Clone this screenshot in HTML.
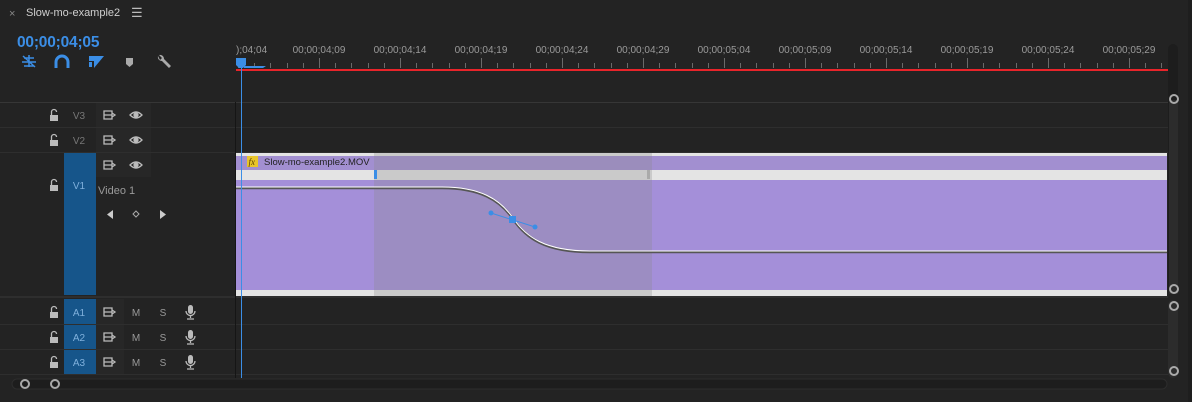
<!DOCTYPE html>
<html><head><meta charset="utf-8"><style>
body{margin:0;width:1192px;height:402px;background:#232323;overflow:hidden;font-family:"Liberation Sans",sans-serif;position:relative}
.a{position:absolute}
.t{color:#9a9a9a;font-size:10px}
</style></head><body>
<div class="a t" style="left:9px;top:8px;font-size:11px;color:#888">×</div>
<div class="a" style="left:26px;top:7px;font-size:11px;color:#cfcfcf">Slow-mo-example2</div>
<div class="a" style="left:131px;top:5px;font-size:13px;color:#bbb">☰</div>
<div class="a" style="left:17px;top:34px;font-size:15.5px;font-weight:bold;color:#3b8ee6;letter-spacing:-0.2px">00;00;04;05</div>
<svg class="a" style="left:0;top:0" width="1192" height="402">
<g fill="#3b8ee6" stroke="#3b8ee6">
<path d="M22 62h14M24 58h10M29 55v12M24 66h10M23 56l12 11" stroke-width="1.5" fill="none"/>
<path d="M56 68v-6a6 6 0 0 1 12 0v6" stroke-width="3" fill="none"/>
<path d="M89 56h5v5h-5zM89 62h3v5h-3z" stroke="none"/><path d="M94 56l10 0-10 12z" stroke="none"/>
</g>
<path d="M126 58h7v6l-3.5 3-3.5-3z" fill="#aaa"/>
<path d="M158 56a4 4 0 0 0 4 5l7 7 2-2-7-7a4 4 0 0 0-5-4l3 3-2 2z" fill="#aaa"/>
<g id="ticks" stroke="#6a6a6a" stroke-width="1"></g>
<g id="labs" fill="#9a9a9a" font-size="10" font-family="Liberation Sans" text-anchor="middle"></g>
<rect x="236" y="69" width="932" height="2" fill="#e8242a"/>
<g fill="#2e2e2e">
<rect x="0" y="102" width="1168" height="1" fill="#363636"/>
<rect x="0" y="127" width="1168" height="1"/>
<rect x="0" y="152" width="1168" height="1"/>
<rect x="0" y="296" width="1168" height="2"/>
<rect x="0" y="324" width="1168" height="1"/>
<rect x="0" y="349" width="1168" height="1"/>
<rect x="0" y="374" width="1168" height="1"/>
<rect x="235" y="102" width="1" height="276" fill="#151515"/>
</g>
<rect x="96" y="103" width="55" height="24" fill="#272727"/>
<rect x="96" y="128" width="55" height="24" fill="#272727"/>
<rect x="96" y="153" width="55" height="24" fill="#272727"/>
<rect x="96" y="299" width="28" height="25" fill="#272727"/>
<rect x="96" y="325" width="28" height="24" fill="#272727"/>
<rect x="96" y="350" width="28" height="24" fill="#272727"/>
<rect x="64" y="153" width="32" height="142" fill="#16558a"/>
<rect x="64" y="299" width="32" height="25" fill="#16558a"/>
<rect x="64" y="325" width="32" height="24" fill="#16558a"/>
<rect x="64" y="350" width="32" height="24" fill="#16558a"/>
<g fill="#9a9a9a" font-size="10" font-family="Liberation Sans" text-anchor="middle">
<text x="79" y="119" fill="#777">V3</text><text x="79" y="144" fill="#777">V2</text>
<text x="79" y="189" fill="#7fb0dc">V1</text>
<text x="79" y="316" fill="#7fb0dc">A1</text><text x="79" y="341" fill="#7fb0dc">A2</text><text x="79" y="366" fill="#7fb0dc">A3</text>
<text x="136" y="316">M</text><text x="136" y="341">M</text><text x="136" y="366">M</text>
<text x="163" y="316">S</text><text x="163" y="341">S</text><text x="163" y="366">S</text>
</g>
<text x="98" y="194" fill="#9a9a9a" font-size="11" font-family="Liberation Sans">Video 1</text>
<g id="icons" fill="none" stroke="#bbb" stroke-width="1.3"></g>
<path d="M113 210v9l-6-4.5z" fill="#ccc"/><path d="M160 210v9l6-4.5z" fill="#ccc"/>
<path d="M136 211l3 3-3 3-3-3z" fill="none" stroke="#aaa"/>
<rect x="236" y="153" width="931" height="143" fill="#e4e4e4"/>
<rect x="236" y="156" width="931" height="14" fill="#a28fd0"/>
<rect x="236" y="180" width="931" height="110" fill="#a48fd9"/>
<rect x="374" y="153" width="278" height="143" fill="#8a8a8a" opacity="0.28"/>
<rect x="247" y="156" width="11" height="11" fill="#e8c52a"/>
<text x="248.5" y="165" font-size="9" font-style="italic" fill="#5a3e00" font-family="Liberation Serif">fx</text>
<text x="264" y="165" font-size="9.5" fill="#222" font-family="Liberation Sans">Slow-mo-example2.MOV</text>
<rect x="374" y="170" width="3" height="9" fill="#3b8ee6"/>
<rect x="647" y="170" width="3" height="9" fill="#aaa"/>
<path d="M236 188H442C480 188 500 200 513 219C526 238 545 252 590 252H1167" stroke="#555" stroke-width="2.5" fill="none"/>
<path d="M236 187H442C480 187 500 199 513 218C526 237 545 251 590 251H1167" stroke="#fff" stroke-width="1" fill="none"/>
<path d="M491 213L535 227" stroke="#3b8ee6" stroke-width="1"/>
<circle cx="491" cy="213" r="2.5" fill="#3b8ee6"/><circle cx="535" cy="227" r="2.5" fill="#3b8ee6"/>
<rect x="509" y="216" width="7" height="7" fill="#3b8ee6"/>
<rect x="241" y="60" width="1" height="318" fill="#3b8ee6"/>
<path d="M236 58h10v7l-3 3h-4l-3-3z" fill="#3b8ee6"/>
<path d="M244 66h22l-3 2h-19z" fill="#3b8ee6"/>
<rect x="1168" y="44" width="10" height="250" rx="5" fill="#1d1d1d"/>
<rect x="1169" y="100" width="9" height="194" fill="#2c2c2c"/>
<rect x="1168" y="300" width="10" height="78" rx="5" fill="#2c2c2c"/>
<rect x="12" y="379" width="1155" height="10" rx="5" fill="#1d1d1d" stroke="#2d2d2d"/>
<g fill="none" stroke="#aaa" stroke-width="2">
<circle cx="1174" cy="99" r="4"/><circle cx="1174" cy="289" r="4"/><circle cx="1174" cy="306" r="4"/><circle cx="1174" cy="371" r="4"/>
<circle cx="25" cy="384" r="4"/><circle cx="55" cy="384" r="4"/>
</g>
<rect x="1188" y="0" width="4" height="402" fill="#1e1e1e"/>
</svg>
<script>
var ns="http://www.w3.org/2000/svg",tk=document.getElementById('ticks'),lb=document.getElementById('labs'),ic=document.getElementById('icons');
var labs=["00;00;04;04","00;00;04;09","00;00;04;14","00;00;04;19","00;00;04;24","00;00;04;29","00;00;05;04","00;00;05;09","00;00;05;14","00;00;05;19","00;00;05;24","00;00;05;29"];
for(var i=0;i<80;i++){var x=238+i*16.2;if(x>1166)break;var l=document.createElementNS(ns,'line');l.setAttribute('x1',Math.round(x)+.5);l.setAttribute('x2',Math.round(x)+.5);l.setAttribute('y1',i%5?63:58);l.setAttribute('y2',68);tk.appendChild(l);}
for(var j=1;j<12;j++){var t=document.createElementNS(ns,'text');var x=238+j*81;t.setAttribute('x',x);t.setAttribute('y',53);t.textContent=labs[j];lb.appendChild(t);}
var t0=document.createElementNS(ns,'text');t0.setAttribute('x',236);t0.setAttribute('y',53);t0.setAttribute('text-anchor','start');t0.textContent=");04;04";lb.appendChild(t0);
function lock(y){return '<rect x="50" y="'+(y-1)+'" width="8" height="6" fill="#bbb" stroke="none"/><path d="M51.5 '+(y-1)+'v-3a2.5 2.5 0 0 1 5 0" />';}
function sync(y){return '<path d="M104 '+(y-4)+'h8v8h-8zM104 '+y+'h8M112 '+(y-2)+'l3 2-3 2"/>';}
function eye(y){return '<path d="M130 '+y+'q6-6 12 0q-6 6-12 0z"/><circle cx="136" cy="'+y+'" r="2" fill="#bbb"/>';}
function mic(y){return '<rect x="188" y="'+(y-7)+'" width="5" height="9" rx="2.5" fill="#bbb" stroke="none"/><path d="M186 '+(y-1)+'a4.5 4.5 0 0 0 9 0M190.5 '+(y+4)+'v2M187 '+(y+7)+'h7"/>';}
var h='';[115,140,185,312,337,362].forEach(function(y){h+=lock(y+1);});
[115,140,165].forEach(function(y){h+=sync(y)+eye(y);});
[312,337,362].forEach(function(y){h+=sync(y)+mic(y);});
ic.innerHTML=h;
</script>
</body></html>
